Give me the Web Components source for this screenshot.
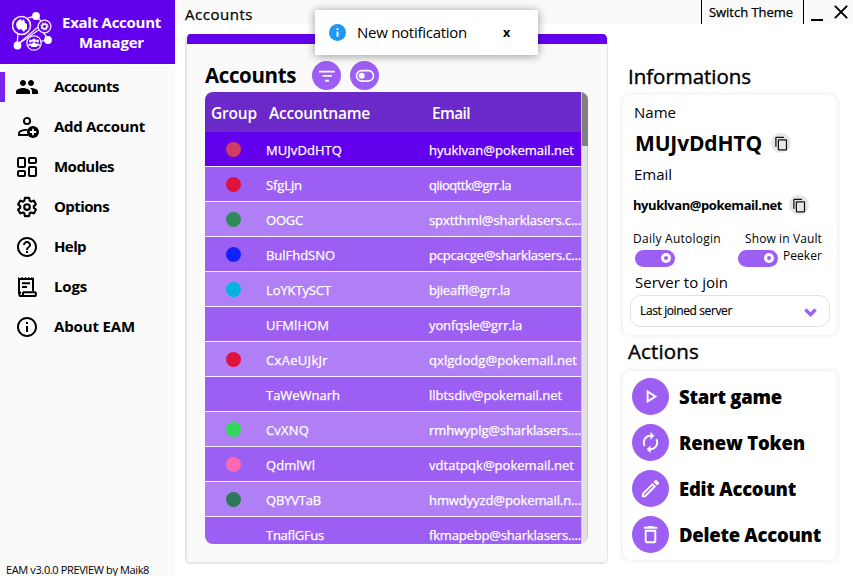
<!DOCTYPE html>
<html lang="en"><head><meta charset="utf-8"><title>Exalt Account Manager</title>
<style>html,body{margin:0;width:853px;height:576px;overflow:hidden;background:#fff;color:#000;font-family:"Open Sans","Noto Sans",sans-serif}</style>
</head><body><eam-app></eam-app>
<script>
const ICONS={
people:'<path d="M16 11c1.66 0 2.99-1.34 2.99-3S17.66 5 16 5c-1.66 0-3 1.34-3 3s1.34 3 3 3zm-8 0c1.66 0 2.99-1.34 2.99-3S9.66 5 8 5C6.34 5 5 6.34 5 8s1.34 3 3 3zm0 2c-2.33 0-7 1.17-7 3.5V19h14v-2.5c0-2.33-4.67-3.5-7-3.5zm8 0c-.29 0-.62.02-.97.05 1.16.84 1.97 1.97 1.97 3.45V19h6v-2.5c0-2.33-4.67-3.5-7-3.5z"/>',
add:'<g fill="none" stroke="currentColor" stroke-width="1.9"><circle cx="12" cy="6" r="3.1"/><path d="M13 20H4v-1.8C4 16 8.5 14.6 12.6 14.9"/></g><circle cx="18" cy="17" r="6"/><path d="M18 13.8v6.4M14.8 17h6.4" stroke="#fafafa" stroke-width="1.8"/>',
modules:'<g fill="none" stroke="currentColor" stroke-width="2"><rect x="3" y="3" width="7" height="9" rx="1"/><rect x="14" y="3" width="7" height="5" rx="1"/><rect x="3" y="16" width="7" height="5" rx="1"/><rect x="14" y="12" width="7" height="9" rx="1"/></g>',
gear:'<g fill="none" stroke="currentColor" stroke-width="2.3" stroke-linejoin="round" transform="translate(1.1 1.1) scale(.91)"><path d="M19.43 12.98c.04-.32.07-.64.07-.98 0-.34-.03-.66-.07-.98l2.11-1.65c.19-.15.24-.42.12-.64l-2-3.46c-.09-.16-.26-.25-.44-.25l-2.66 1.03c-.52-.4-1.08-.73-1.69-.98l-.38-2.65C14.46 2.18 14.25 2 14 2h-4c-.25 0-.46.18-.49.42l-.38 2.65c-.61.25-1.17.59-1.69.98l-2.49-1c-.24-.05-.5.02-.61.22l-2 3.46c-.13.22-.07.49.12.64l2.11 1.65c-.04.32-.07.65-.07.98 0 .33.03.66.07.98l-2.11 1.65c-.19.15-.24.42-.12.64l2 3.46c.09.16.26.25.44.25l2.66-1.03c.52.4 1.08.73 1.69.98l.38 2.65c.03.24.24.42.49.42h4c.25 0 .46-.18.49-.42l.38-2.65c.61-.25 1.17-.59 1.69-.98l2.49 1c.24.05.5-.02.61-.22l2-3.46c.12-.22.07-.49-.12-.64z"/><circle cx="12" cy="12" r="3.1"/></g>',
help:'<path d="M11 18h2v-2h-2v2zm1-16C6.48 2 2 6.48 2 12s4.48 10 10 10 10-4.48 10-10S17.52 2 12 2zm0 18c-4.41 0-8-3.59-8-8s3.59-8 8-8 8 3.59 8 8-3.59 8-8 8zm0-14c-2.21 0-4 1.79-4 4h2c0-1.1.9-2 2-2s2 .9 2 2c0 2-3 1.75-3 5h2c0-2.25 3-2.5 3-5 0-2.21-1.79-4-4-4z"/>',
logs:'<g fill="none" stroke="currentColor" stroke-width="2"><path d="M4 19V4h14v12M8 17.2h12c1.3 0 1.3 3.8-.4 3.8H6c-2.2 0-2.2-3 0-3.8M8 17v4M7 8.2h8M7 12h5"/></g><path d="M3 2l2 1.5L7 2l1.7 1.5L10.3 2 12 3.5 13.7 2l1.6 1.5L17 2l1 1.5L19 2v3H3z"/>',
info:'<path d="M11 7h2v2h-2V7zm0 4h2v6h-2v-6zm1-9C6.48 2 2 6.48 2 12s4.48 10 10 10 10-4.48 10-10S17.52 2 12 2zm0 18c-4.41 0-8-3.59-8-8s3.59-8 8-8 8 3.59 8 8-3.59 8-8 8z"/>',
play:'<path d="M10 8.64L15.27 12 10 15.36V8.64M8 5v14l11-7L8 5z"/>',
renew:'<path d="M12 6v3l4-4-4-4v3c-4.42 0-8 3.58-8 8 0 1.57.46 3.03 1.24 4.26L6.7 14.8c-.45-.83-.7-1.79-.7-2.8 0-3.31 2.69-6 6-6zm6.76 1.74L17.3 9.2c.44.84.7 1.79.7 2.8 0 3.31-2.69 6-6 6v-3l-4 4 4 4v-3c4.42 0 8-3.58 8-8 0-1.57-.46-3.03-1.24-4.26z"/>',
edit:'<path d="M14.06 9.02l.92.92L5.92 19H5v-.92l9.06-9.06M17.66 3c-.25 0-.51.1-.7.29l-1.83 1.83 3.75 3.75 1.83-1.83c.39-.39.39-1.02 0-1.41l-2.34-2.34c-.2-.2-.45-.29-.71-.29zm-3.6 3.19L3 17.25V21h3.75L17.81 9.94l-3.75-3.75z"/>',
trash:'<path d="M6 19c0 1.1.9 2 2 2h8c1.1 0 2-.9 2-2V7H6v12zM8 9h8v10H8V9zm7.5-5l-1-1h-5l-1 1H5v2h14V4z"/>',
copy:'<path d="M16 1H4c-1.100 0-2 .9-2 2v14h2V3h12V1zm3 4H8c-1.100 0-2 .9-2 2v14c0 1.100.9 2 2 2h11c1.100 0 2-.9 2-2V7c0-1.100-.9-2-2-2zm0 16H8V7h11v14z"/>',
filter:'<path d="M1.500 5h21v2.200h-21zM6 10.700h12.500v2.200H6zM9.500 17h5v2.500h-5z"/>',
toggle:'<rect x="1.800" y="5.500" width="20.400" height="12.600" rx="6.300" fill="none" stroke="currentColor" stroke-width="1.900"/><circle cx="8" cy="11.800" r="3.600"/>',
badge:'<circle cx="12" cy="12" r="12" fill="#2196f3"/><path d="M10.700 6h2.700v2.400h-2.700zM10.700 10.500h2.700V18h-2.700z" fill="#fff"/>',
chevron:'<path d="M2.500 6.500L12 16l9.500-9.500" fill="none" stroke="currentColor" stroke-width="6"/>',
close:'<path d="M1.500 1.500l21 21M22.500 1.500l-21 21" stroke="currentColor" stroke-width="3.400"/>'
};
/* Base class: renders a shadow tree from styles() and html(). */
class Base extends HTMLElement{
 connectedCallback(){if(this.shadowRoot)return;const t=document.createElement('template');t.innerHTML='<style>*{box-sizing:border-box}'+this.styles()+'</style>'+this.html();this.attachShadow({mode:'open'}).append(t.content.cloneNode(true));}
 a(n,d=''){return this.getAttribute(n)??d}
}
/* Text run whose tracking is adjusted to fill a given width. */
class FitText extends Base{
 styles(){return `:host{display:inline-block;white-space:nowrap;flex:none;width:${this.a('w')}px}span{display:inline-block}`}
 html(){return '<span><slot></slot></span>'}
 connectedCallback(){super.connectedCallback();const s=this.shadowRoot.querySelector('span');const n=this.textContent.length;s.style.letterSpacing=((+this.a('w')-s.getBoundingClientRect().width)/n).toFixed(3)+'px'}
}
class EamIcon extends Base{
 styles(){const s=this.a('size','24');return `:host{display:block;flex:none;width:${s}px;height:${s}px}svg{display:block;width:100%;height:100%}`}
 html(){return `<svg viewBox="0 0 24 24" fill="currentColor">${ICONS[this.a('name')]}</svg>`}
}
class EamLogo extends Base{
 styles(){return ':host{display:block;width:42px;height:42px;flex:none}svg{display:block}'}
 html(){return `<svg width="42" height="42" viewBox="0 0 42 42" fill="none" stroke="#f3eaff" stroke-width="1.300"><path d="M16 7l8-2M24 5l5 5M6 23L5 34M5 34L28 18M31 21l5 7M28 31l8-3"/><circle cx="9.500" cy="14.500" r="9" fill="#6200ee" stroke-width="1.600"/><circle cx="32.500" cy="15.500" r="6.400" fill="#6200ee"/><circle cx="22" cy="32" r="7.200" fill="#6200ee"/><path d="M5 34L26 16"/><g fill="#fff" stroke="none"><circle cx="24" cy="5" r="3.900"/><circle cx="5.500" cy="34.500" r="3.900"/><circle cx="36" cy="29" r="3.900"/><path d="M4 14c0-3 2-5 5-6l1 2 2-2 1 4 2 1v5l-2 1-1 2-3-3-2 1-2-2z"/><circle cx="22" cy="29.500" r="2"/><circle cx="18.500" cy="30" r="1.500"/><circle cx="25.500" cy="30" r="1.500"/><path d="M16 35c0-3 3-3 4-2 0-2 4-2 4 0 1-1 4-1 4 2l-3-.5V36h-6v-1.500z"/></g><circle cx="32.500" cy="15.500" r="2.300" stroke-width="1.700"/><circle cx="32.500" cy="15.500" r="3.500" stroke-width="1.100" stroke-dasharray="1.500 1.250"/></svg>`}
}
class NavItem extends Base{
 styles(){return `:host{display:flex;align-items:center;height:40px;font-size:15px;font-weight:700}i{width:5px;height:30px;margin-right:10px;${this.hasAttribute('active')?'background:#7a22ee':''}}fit-text{margin:-2px 0 0 15px;line-height:20px}`}
 html(){return `<i></i><eam-icon name="${this.a('icon')}"></eam-icon><fit-text w="${this.a('w')}">${this.a('label')}</fit-text>`}
}
class EamSidebar extends Base{
 styles(){return `:host{display:flex;flex-direction:column;width:175px;height:576px;background:#fafafa;flex:none}
 header{height:64px;background:#6200ee;display:flex;padding:11px 0 0 12px;color:#fff;font-size:15px;font-weight:700;flex:none}
 .t{display:flex;flex-direction:column;align-items:center;width:99px;margin-left:8px;margin-top:1px;line-height:20px}
 nav{border-top:2px solid #fff;padding-top:1px;flex:1}footer{font-size:11px;line-height:14px;height:14px;padding-left:6px;margin-top:-14px}`}
 html(){return `<header><eam-logo></eam-logo><div class="t"><fit-text w="99">Exalt Account</fit-text><fit-text w="65">Manager</fit-text></div></header><nav>${[['people','Accounts',65],['add','Add Account',91],['modules','Modules',60],['gear','Options',55],['help','Help',32],['logs','Logs',33],['info','About EAM',81]].map((x,i)=>`<nav-item ${i?'':'active'} icon="${x[0]}" label="${x[1]}" w="${x[2]}"></nav-item>`).join('')}</nav><footer><fit-text w="143" style="position:relative;top:1px">EAM v3.0.0 PREVIEW by Maik8</fit-text></footer>`}
}
class TitleBar extends Base{
 styles(){return `:host{display:flex;height:24px;background:#fafafa;padding-left:10px;-webkit-text-stroke:.25px #000}
 .n{font-size:15px;line-height:28px;margin-right:auto}.s{width:103px;height:24px;border:solid #000;border-width:0 1px;padding-left:7px;font-size:13px;line-height:24px}
 b{width:12px;height:2px;background:#000;margin:19px 11px 0 7px}eam-icon{margin:5px 5px 0 0}`}
 html(){return '<fit-text class="n" w="68">Accounts</fit-text><div class="s"><fit-text w="84">Switch Theme</fit-text></div><b></b><eam-icon name="close" size="14"></eam-icon>'}
}
class RoundButton extends Base{
 styles(){const s=this.a('size');return `:host{display:grid;place-items:center;flex:none;width:${s}px;height:${s}px;border-radius:50%;background:var(--rb,#9d5ff3);color:var(--rc,#fff)}`}
 html(){return `<eam-icon name="${this.a('icon')}" size="${this.a('glyph')}"></eam-icon>`}
}
class AccountRow extends Base{
 styles(){return `:host{display:flex;height:35px;flex:none;border-bottom:1px solid #f5efff;color:#fff;font-size:13px;line-height:36px;-webkit-text-stroke:.25px #fff}
 .d{width:61px;flex:none;padding:10px 0 0 20.500px}i{display:block;width:15px;height:15px;border-radius:50%;background:${this.a('dot','transparent')}}.n{width:163px;flex:none}`}
 html(){return `<div class="d"><i></i></div><div class="n"><fit-text w="${this.a('nw')}">${this.a('name')}</fit-text></div><fit-text w="${this.a('ew')}">${this.a('email')}</fit-text>`}
}
class AccountTable extends Base{
 styles(){return `:host{display:flex;width:383px;height:452px;border-radius:8px;overflow:hidden}
 .m{width:376px;height:452px;overflow:hidden;display:flex;flex-direction:column}
 .h{display:flex;height:40px;flex:none;background:#6a29c8;color:#fff;font-size:15.500px;line-height:43px;font-weight:600;padding-left:6px}
 .h>:nth-child(1){margin-right:12px}.h>:nth-child(2){margin-right:62px}
 .s{width:7px;background:#e2e2e2;border:solid #cbcbcb;border-width:0 1px}.s i{display:block;height:54px;width:6px;background:#808080}`}
 html(){const r=[['#d23c64','MUJvDdHTQ',76,'hyuklvan@pokemail.net',145],['#dc143c','SfgLjn',36,'qiioqttk@grr.la',82],['#2e8b57','OOGC',37,'spxtthml@sharklasers.c...',152],['#1020ff','BulFhdSNO',69,'pcpcacge@sharklasers.c...',152],['#00b4dc','LoYKTySCT',65,'bjieaffl@grr.la',81],['','UFMlHOM',63,'yonfqsle@grr.la',93],['#dc143c','CxAeUJkJr',62,'qxlgdodg@pokemail.net',148],['','TaWeWnarh',74,'llbtsdiv@pokemail.net',133],['#32d75a','CvXNQ',43,'rmhwyplg@sharklasers....',152],['#ff69b4','QdmlWl',49,'vdtatpqk@pokemail.net',145],['#2d785a','QBYVTaB',55,'hmwdyyzd@pokemail.n...',152],['','TnaflGFus',58,'fkmapebp@sharklasers....',152]];
 return `<div class="m"><div class="h"><fit-text w="46">Group</fit-text><fit-text w="101">Accountname</fit-text><fit-text w="38">Email</fit-text></div>${r.map((x,i)=>`<account-row style="background:${i?(i%2?'#9d5ff3':'#b17ff5'):'#6200ee'}" dot="${x[0]||'transparent'}" name="${x[1]}" nw="${x[2]}" email="${x[3]}" ew="${x[4]}"></account-row>`).join('')}</div><div class="s"><i></i></div>`}
}
class AccountsCard extends Base{
 styles(){return `:host{display:block;width:423px;height:530px;margin:10px 0 0 10px;background:#fafafa;border:solid #e6e6e6;border-width:0 1px 2px 2px;border-radius:5px;overflow:hidden;flex:none}
 .b{height:10px;background:#6200ee}.t{display:flex;align-items:center;height:48px;padding:15px 0 0 18px;font-size:20.500px;font-weight:700;line-height:30px}
 .t fit-text{margin-top:-2px}.t round-button:nth-of-type(1){margin:0 9px 0 16px}.w{padding:0 0 0 18px}`}
 html(){return '<div class="b"></div><div class="t"><fit-text w="91">Accounts</fit-text><round-button icon="filter" size="29" glyph="18"></round-button><round-button icon="toggle" size="29" glyph="20"></round-button></div><div class="w"><account-table></account-table></div>'}
}
class SoftCard extends Base{
 styles(){return ':host{display:block;width:214px;margin-left:-5px;background:#fff;border-radius:8px;box-shadow:0 0 4px 2px #f2f2f2}'}
 html(){return '<slot></slot>'}
}
class EamSwitch extends Base{
 styles(){return ':host{display:flex;justify-content:flex-end;width:40px;height:17px;padding:3px 4px;border-radius:9px;background:#9d5ff3;flex:none}i{width:10px;height:10px;border:3px solid #fff;border-radius:50%}'}
 html(){return '<i></i>'}
}
class EamSelect extends Base{
 styles(){return ':host{display:flex;align-items:center;justify-content:space-between;width:200px;height:32px;border:1px solid #e3e3e3;border-radius:11px;padding:0 12px 0 9px;font-size:12px;color:#000;-webkit-text-stroke:.15px #000}eam-icon{color:#9d5ff3;margin-top:2px}fit-text{margin-top:-1px}'}
 html(){return `<fit-text w="92">${this.a('value')}</fit-text><eam-icon name="chevron" size="13"></eam-icon>`}
}
class InfoPanel extends Base{
 styles(){return `:host{display:block;margin-left:20px;width:225px;--rb:#e6e6e6;--rc:#111}
 h2{font-size:20.500px;font-weight:400;-webkit-text-stroke:.4px #000;line-height:28px;margin:0;height:34px;padding-top:1px;white-space:nowrap}
 .c{height:240px;padding-left:7px;display:flex;flex-direction:column}.r{display:flex;align-items:center;flex:none}
 .x{display:flex;height:48px;padding:11px 0 0 3px;font-size:12px;line-height:17px}
 .l eam-switch{margin:3px 0 0 2px}.g{width:84px;margin-left:17px;display:flex;flex-direction:column;align-items:flex-end}.g div{display:flex;justify-content:space-between;width:84px}.g eam-switch{margin-top:3px}`}
 html(){return `<h2><fit-text w="123">Informations</fit-text></h2><soft-card><div class="c">
 <div class="r" style="height:34px;padding-left:4px;font-size:15px"><fit-text w="42">Name</fit-text></div>
 <div class="r" style="height:28px;padding-left:5px;font-size:21px;line-height:28px;font-weight:700"><fit-text w="127">MUJvDdHTQ</fit-text><round-button style="margin-left:9px" icon="copy" size="20" glyph="15"></round-button></div>
 <div class="r" style="height:34px;padding-left:4px;font-size:15px"><fit-text w="38">Email</fit-text></div>
 <div class="r" style="height:28px;padding-left:3px;font-size:13px;font-weight:700"><fit-text w="149">hyuklvan@pokemail.net</fit-text><round-button style="margin-left:7px" icon="copy" size="20" glyph="15"></round-button></div>
 <div class="x"><div class="l"><fit-text w="88" style="display:block">Daily Autologin</fit-text><eam-switch></eam-switch></div><div class="g"><fit-text w="77">Show in Vault</fit-text><div><eam-switch></eam-switch><fit-text w="39">Peeker</fit-text></div></div></div>
 <div class="r" style="height:28px;padding:2px 0 0 5px;font-size:15px;line-height:20px"><fit-text w="93">Server to join</fit-text></div>
 <eam-select value="Last joined server"></eam-select></div></soft-card>`}
}
class ActionsPanel extends Base{
 styles(){return `:host{display:block;margin-left:20px;width:225px}h2{font-size:20.500px;font-weight:400;-webkit-text-stroke:.4px #000;line-height:28px;margin:0;height:36px;padding-top:2px}
 .c{height:189px;padding:7px 0 0 9px}.r{display:flex;align-items:center;height:37px;margin-bottom:9px;font-size:18.500px;font-weight:800;line-height:28px}fit-text{margin:0 0 0 10px}h2 fit-text{margin:0}`}
 html(){return `<h2><fit-text w="71">Actions</fit-text></h2><soft-card><div class="c">${[['play','Start game',103],['renew','Renew Token',126],['edit','Edit Account',117],['trash','Delete Account',142]].map(x=>`<div class="r"><round-button icon="${x[0]}" size="37" glyph="23"></round-button><fit-text w="${x[2]}">${x[1]}</fit-text></div>`).join('')}</div></soft-card>`}
}
class EamToast extends Base{
 styles(){return ':host{display:flex;position:absolute;left:315px;top:10px;width:223px;height:45px;background:#fff;box-shadow:0 1px 9px rgba(0,0,0,.4);padding-left:14px;align-items:center;font-size:15px}eam-icon{margin-right:11px}fit-text{margin-top:-1px}.x{font-size:12.500px;font-weight:700;margin-left:36px}'}
 html(){return '<eam-icon name="badge" size="17"></eam-icon><fit-text w="110">New notification</fit-text><fit-text class="x" w="8">x</fit-text>'}
}
class EamApp extends Base{
 styles(){return ':host{display:flex;width:853px;height:576px;position:relative;overflow:hidden}.m{width:678px}.b{display:flex}.r{padding-top:37px}'}
 html(){return '<eam-sidebar></eam-sidebar><div class="m"><title-bar></title-bar><div class="b"><accounts-card></accounts-card><div class="r"><info-panel></info-panel><actions-panel></actions-panel></div></div></div><eam-toast></eam-toast>'}
}
Object.entries({'fit-text':FitText,'eam-icon':EamIcon,'eam-logo':EamLogo,'nav-item':NavItem,'eam-sidebar':EamSidebar,'title-bar':TitleBar,'round-button':RoundButton,'account-row':AccountRow,'account-table':AccountTable,'accounts-card':AccountsCard,'soft-card':SoftCard,'eam-switch':EamSwitch,'eam-select':EamSelect,'info-panel':InfoPanel,'actions-panel':ActionsPanel,'eam-toast':EamToast,'eam-app':EamApp}).forEach(([n,c])=>customElements.define(n,c));
</script></body></html>
